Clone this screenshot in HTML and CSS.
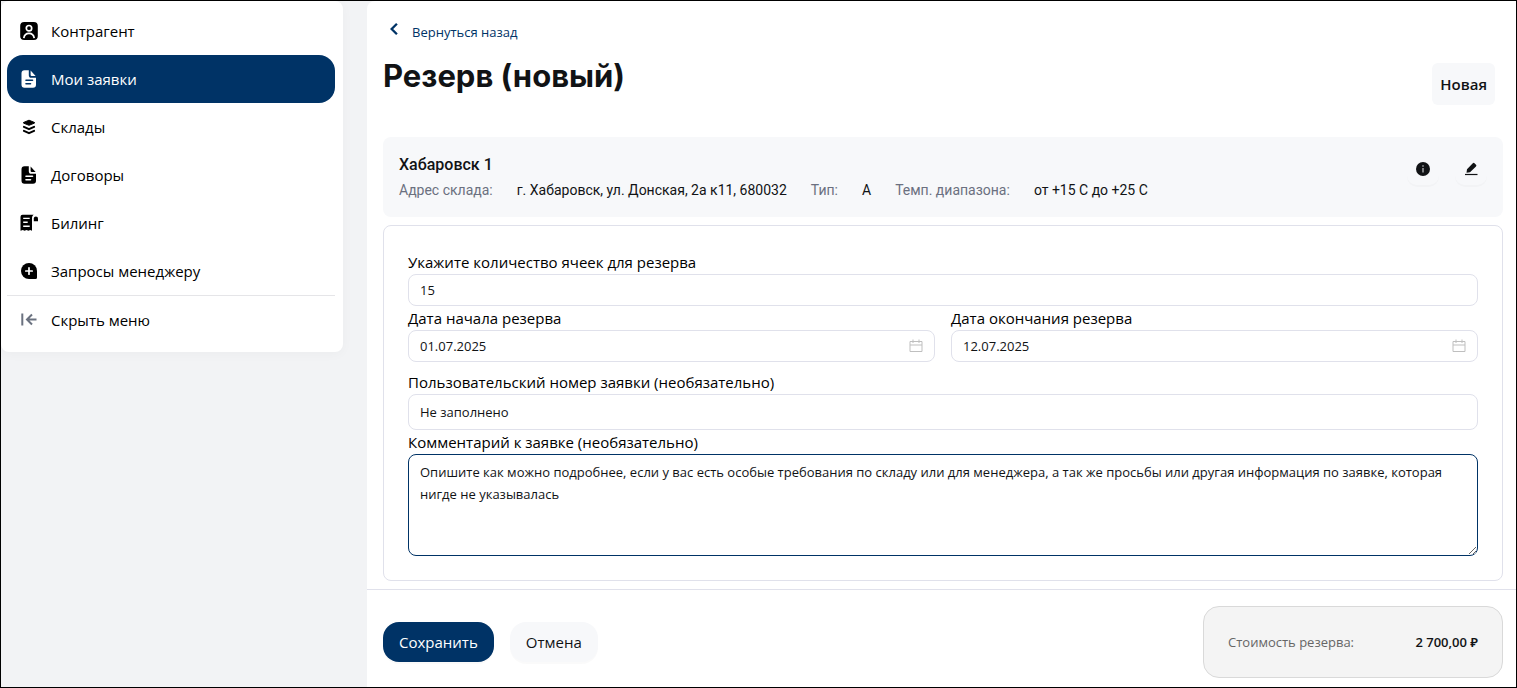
FILE: index.html
```html
<!DOCTYPE html>
<html lang="ru">
<head>
<meta charset="utf-8">
<title>Резерв (новый)</title>
<link rel="stylesheet" href="styles.css">
</head>
<body>
<div class="app">
  <aside class="rail">
    <nav class="menu">
      <a class="menu-item" href="#">
        <svg class="icon" viewBox="0 0 20 20"><rect x="1.200" y="1" width="17.600" height="18" rx="4" fill="currentColor"/><circle cx="10" cy="7.200" r="2.700" fill="none" stroke="#fff" stroke-width="1.700"/><path d="M4.800 17.200c.5-3.300 2.500-4.800 5.200-4.800s4.700 1.500 5.200 4.800" fill="none" stroke="#fff" stroke-width="1.700"/></svg>
        <span>Контрагент</span></a>
      <a class="menu-item active" href="#">
        <svg class="icon" viewBox="0 0 20 20"><path d="M5.500 1.300h4.300v4.900c0 1.600.9 2.600 2.500 2.600H17v7a3 3 0 0 1-3 3H5.500a3 3 0 0 1-3-3V4.300a3 3 0 0 1 3-3z" fill="currentColor"/><path d="M11.600 1.500l5 5.500h-4a1 1 0 0 1-1-1z" fill="currentColor"/><path d="M7 11.200h6.500M7 14.700h4.500" stroke="#003366" stroke-width="1.600" stroke-linecap="round"/></svg>
        <span>Мои заявки</span></a>
      <a class="menu-item" href="#">
        <svg class="icon" viewBox="0 0 20 20"><path d="M10 3.200l5.500 2.300v.6L10 8.300 4.500 6.100v-.6z" fill="currentColor" stroke="currentColor" stroke-linejoin="round"/><path d="M4.900 9.900l5.100 2.300 5.100-2.300M4.900 13.900l5.100 2.300 5.100-2.300" fill="none" stroke="currentColor" stroke-width="2" stroke-linecap="round" stroke-linejoin="round"/></svg>
        <span>Склады</span></a>
      <a class="menu-item" href="#">
        <svg class="icon" viewBox="0 0 20 20"><path d="M5.500 1.300h4.300v4.900c0 1.600.9 2.600 2.500 2.600H17v7a3 3 0 0 1-3 3H5.500a3 3 0 0 1-3-3V4.300a3 3 0 0 1 3-3z" fill="currentColor"/><path d="M11.600 1.500l5 5.500h-4a1 1 0 0 1-1-1z" fill="currentColor"/><path d="M7 11.200h6.500M7 14.700h4.500" stroke="#fff" stroke-width="1.600" stroke-linecap="round"/></svg>
        <span>Договоры</span></a>
      <a class="menu-item" href="#">
        <svg class="icon" viewBox="0 0 20 20"><path d="M3.500 1.800h11.300c-1.200.7-1.800 1.800-1.800 3.500v12.500l-1.800-.9-1.800.9-1.900-.9-1.900.9-1.800-.9-2.300.9V3.800a2 2 0 0 1 2-2z" fill="currentColor"/><path d="M14.800 8.200V5.500a2.100 2.100 0 0 1 4.200 0v2.700z" fill="currentColor"/><path d="M4.200 5.400h6.500M4.200 9.300h4.500M4.200 13.200h6.500" stroke="#fff" stroke-width="1.400"/></svg>
        <span>Билинг</span></a>
      <a class="menu-item" href="#">
        <svg class="icon" viewBox="0 0 20 20"><path d="M10 2a8 8 0 0 1 8 8v6.500a1.500 1.500 0 0 1-1.500 1.500H10a8 8 0 0 1 0-16z" fill="currentColor"/><path d="M10 6.800v6.400M6.800 10h6.400" stroke="#fff" stroke-width="1.700" stroke-linecap="round"/></svg>
        <span>Запросы менеджеру</span></a>
      <button class="menu-item menu-toggle" type="button">
        <svg class="icon" viewBox="0 0 20 20"><path d="M3.300 3.500v12M17.500 9.500H8.500M13 4.500l-5 5 5 5" fill="none" stroke="#6b7280" stroke-width="2"/></svg>
        <span>Скрыть меню</span></button>
    </nav>
  </aside>

  <main class="page">
    <div class="content">
      <header class="head">
        <div class="head-main">
          <a class="back" href="#"><svg class="chevron" viewBox="0 0 12 12"><path d="M8.500 1.500L4 6l4.500 4.500" fill="none" stroke="currentColor" stroke-width="2"/></svg><span>Вернуться назад</span></a>
          <h1 class="title">Резерв (новый)</h1>
        </div>
        <span class="status">Новая</span>
      </header>

      <section class="store">
        <div class="store-info">
          <h2 class="store-name">Хабаровск 1</h2>
          <dl class="facts">
            <dt>Адрес склада:</dt><dd>г. Хабаровск, ул. Донская, 2а к11, 680032</dd>
            <dt>Тип:</dt><dd>A</dd>
            <dt>Темп. диапазона:</dt><dd>от +15 С до +25 С</dd>
          </dl>
        </div>
        <div class="store-tools">
          <button class="tool" type="button" aria-label="Информация"><svg class="tool-icon" viewBox="0 0 16 16"><circle cx="8" cy="8" r="7" fill="currentColor"/><path d="M8 7v4.500M8 4.300v1.400" stroke="#9a9b9d" stroke-width="1.600"/></svg></button>
          <button class="tool" type="button" aria-label="Изменить"><svg class="tool-icon" viewBox="0 0 16 16"><path d="M3.500 11.700l.5-3.500L9.800 2.200a1.200 1.200 0 0 1 1.700 0l1.500 1.500a1.200 1.200 0 0 1 0 1.700l-6 5.800z" fill="currentColor"/><path d="M2 13.500h12.500" stroke="currentColor" stroke-width="1.200"/></svg></button>
        </div>
      </section>

      <form class="form" id="reserve">
        <div class="field"><label for="cells">Укажите количество ячеек для резерва</label><input class="input" id="cells" type="text" value="15"></div>
        <div class="dates">
          <div class="field"><label for="from">Дата начала резерва</label>
            <div class="date-box"><input class="input" id="from" type="text" value="01.07.2025"><svg class="calendar" viewBox="0 0 14 14"><path d="M1 2.500h12v10H1zM1 6h12M4 .5v3.500M10 .5v3.500" fill="none" stroke="currentColor"/></svg></div></div>
          <div class="field"><label for="to">Дата окончания резерва</label>
            <div class="date-box"><input class="input" id="to" type="text" value="12.07.2025"><svg class="calendar" viewBox="0 0 14 14"><path d="M1 2.500h12v10H1zM1 6h12M4 .5v3.500M10 .5v3.500" fill="none" stroke="currentColor"/></svg></div></div>
        </div>
        <div class="field"><label for="number">Пользовательский номер заявки (необязательно)</label><input class="input input-tall" id="number" type="text" value="Не заполнено"></div>
        <div class="field"><label for="comment">Комментарий к заявке (необязательно)</label><textarea class="input area" id="comment">Опишите как можно подробнее, если у вас есть особые требования по складу или для менеджера, а так же просьбы или другая информация по заявке, которая нигде не указывалась</textarea></div>
      </form>
    </div>

    <footer class="bar">
      <div class="actions">
        <button class="btn btn-primary" type="submit" form="reserve">Сохранить</button>
        <button class="btn" type="button">Отмена</button>
      </div>
      <div class="cost"><span class="cost-label">Стоимость резерва:</span><strong class="cost-value">2 700,00 ₽</strong></div>
    </footer>
  </main>
</div>
</body>
</html>
```
FILE: styles.css
```css
* { box-sizing: border-box; }
body {
  margin: 0;
  font-family: "Open Sans", "Noto Sans", sans-serif;
  font-size: 15px;
  line-height: 24px;
  color: #111315;
}
button, input, textarea { font: inherit; color: inherit; }

.app {
  display: flex;
  min-height: 100vh;
  border: 1px solid #000;
  background: #f2f3f5;
}

.rail { flex: none; width: 342px; margin-right: 24px; }
.menu {
  display: flex;
  flex-direction: column;
  padding: 6px 8px 8px 6px;
  background: #fff;
  border-radius: 8px;
  box-shadow: 0 2px 12px rgba(0, 0, 0, 0.03);
}
.menu-item {
  display: flex;
  align-items: center;
  gap: 12px;
  height: 48px;
  padding: 0 12px;
  border: 0;
  border-radius: 16px;
  background: none;
  color: #000;
  text-decoration: none;
  text-align: left;
}
.menu-item.active { background: #036; color: #fff; font-weight: 500; }
.menu-toggle { height: 49px; border-top: 1px solid #e5e5e8; border-radius: 0; }
.icon { flex: none; width: 20px; height: 20px; }

.page { flex: 1; min-width: 0; display: flex; flex-direction: column; background: #fff; border-radius: 8px 0 0 0; }
.content { flex: 1; padding: 15px 13px 8px 16px; }

.head { display: flex; justify-content: space-between; align-items: flex-end; padding-right: 8px; margin-bottom: 32px; }
.head-main { padding-bottom: 9px; }
.back { display: inline-flex; gap: 11px; padding-left: 4px; font-size: 13px; line-height: 32px; color: #036; text-decoration: none; }
.chevron { width: 14px; height: 14px; margin-top: 6px; }
.title { margin: 8px 0 0; font-family: Inter, sans-serif; font-size: 31px; line-height: 40px; font-weight: 700; }
.status { padding: 9px 8px; border-radius: 6px; background: #f7f8fa; font-weight: 600; }

.store { display: flex; justify-content: space-between; margin-bottom: 8px; padding: 16px; border-radius: 8px; background: #f7f8fa; }
.store-name { margin: 0 0 2px; font-family: Roboto, sans-serif; font-size: 16px; line-height: 24px; font-weight: 500; }
.facts { display: flex; flex-wrap: wrap; column-gap: 24px; margin: 0; font-family: Roboto, sans-serif; font-size: 14px; line-height: 22px; }
.facts dt { color: #6b7080; }
.facts dd { margin: 0; }
.store-tools { display: flex; gap: 16px; }
.tool { display: flex; align-items: center; justify-content: center; width: 32px; height: 32px; padding: 0; border: 0; border-radius: 10px; background: none; box-shadow: 0 2px 0 rgba(0, 0, 0, 0.02); }
.tool-icon { width: 16px; height: 16px; }

.form { padding: 24px; border: 1px solid #e0e1eb; border-radius: 8px; }
.field { display: flex; flex-direction: column; color: #000; }
.dates { display: grid; grid-template-columns: 1fr 1fr; gap: 16px; margin-bottom: 8px; }
.input { width: 100%; height: 32px; padding: 0 11px; border: 1px solid #e0e1eb; border-radius: 8px; background: #fff; color: #111315; font-size: 13px; line-height: 22px; outline: 0; }
.input-tall { height: 36px; }
.area { display: block; height: 102px; padding: 6px 11px; border-color: #036; resize: vertical; }
.date-box { position: relative; }
.calendar { position: absolute; top: 9px; right: 12px; width: 14px; height: 14px; color: #bfbfbf; }

.bar { display: flex; justify-content: space-between; align-items: center; padding: 16px 13px 9px 16px; border-top: 1px solid #e0e1eb; }
.actions { display: flex; gap: 16px; }
.btn { height: 40px; padding: 0 16px; border: 0; border-radius: 16px; background: #f7f8fa; box-shadow: 0 2px 0 rgba(0, 0, 0, 0.02); }
.btn-primary { background: #036; color: #fff; }
.cost { display: flex; justify-content: space-between; align-items: center; width: 300px; height: 72px; padding: 0 24px; border: 1px solid #d9d9d9; border-radius: 16px; background: #f4f4f4; font-size: 13px; }
.cost-label { color: #666; }
.cost-value { font-weight: 600; }
```
